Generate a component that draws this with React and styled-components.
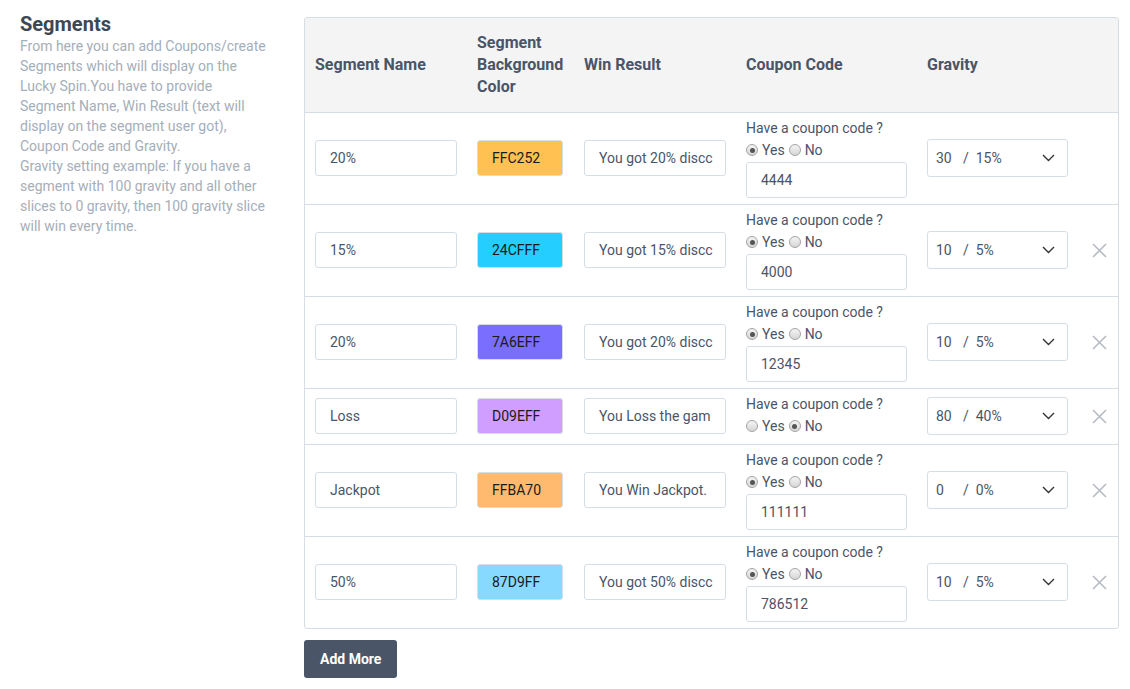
import React from "react";
import styled, { createGlobalStyle } from "styled-components";

const GlobalStyle = createGlobalStyle`
  body {
    margin: 0;
    background: #fff;
    font-family: Roboto, "Liberation Sans", Arial, sans-serif;
  }
`;

const Page = styled.div`
  display: flex;
  align-items: flex-start;
  padding: 12px 11px 0 20px;
`;

const Intro = styled.div`
  width: 248px;
  flex: none;
  margin-right: 36px;
`;

const Title = styled.h2`
  margin: 0;
  font-size: 20px;
  line-height: 24px;
  font-weight: 700;
  color: #3d4852;
`;

const Description = styled.p`
  margin: 0;
  font-size: 14px;
  line-height: 20px;
  color: #a5aeb9;
`;

const Main = styled.div`
  flex: 1;
  padding-top: 5px;
`;

const Card = styled.div`
  border: 1px solid #d7dde4;
  border-radius: 3px;
  overflow: hidden;
`;

const Table = styled.table`
  width: 100%;
  table-layout: fixed;
  border-collapse: separate;
  border-spacing: 0;
`;

const Th = styled.th`
  background: #f4f4f4;
  text-align: left;
  vertical-align: middle;
  padding: 14px 10px;
  font-size: 16px;
  line-height: 22px;
  font-weight: 700;
  color: #4a5568;
  border-bottom: 1px solid #d7dde4;
`;

const Td = styled.td`
  padding: 5px 10px 6px;
  vertical-align: middle;
  border-top: ${(p) => (p.$first ? "none" : "1px solid #d7dde4")};
`;

const TextInput = styled.div`
  box-sizing: border-box;
  width: ${(p) => p.$width || 142}px;
  height: 36px;
  border: 1px solid #d5dde5;
  border-radius: 3px;
  background: ${(p) => p.$bg || "#fff"};
  padding: 0 14px;
  display: flex;
  align-items: center;
  font-size: 14px;
  color: ${(p) => (p.$bg ? "#1a1a1a" : "#4a5568")};
  white-space: nowrap;
  overflow: hidden;
`;

const Question = styled.div`
  font-size: 14px;
  line-height: 20px;
  color: #4a5568;
`;

const RadioRow = styled.div`
  display: flex;
  align-items: center;
  height: 22px;
  margin-bottom: 2px;
  padding-top: 2px;
  box-sizing: border-box;
  font-size: 14px;
  color: #4a5568;
`;

const RadioDot = styled.span`
  box-sizing: border-box;
  width: 12px;
  height: 12px;
  border-radius: 50%;
  border: 1px solid #a3a3a3;
  background: linear-gradient(#f4f4f4, #d6d6d6);
  margin-right: 4px;
  display: inline-flex;
  align-items: center;
  justify-content: center;
  &::after {
    content: "";
    width: 5px;
    height: 5px;
    border-radius: 50%;
    background: ${(p) => (p.$checked ? "#555" : "transparent")};
  }
`;

const RadioLabel = styled.span`
  margin-right: 4px;
`;

const Select = styled.div`
  box-sizing: border-box;
  width: 141px;
  height: 38px;
  border: 1px solid #d5dde5;
  border-radius: 3px;
  padding: 0 12px 0 8px;
  display: flex;
  align-items: center;
  font-size: 14px;
  color: #4a5568;
`;

const GravityNum = styled.span`
  display: inline-block;
  width: 27px;
`;

const GravityPct = styled.span`
  flex: 1;
  white-space: pre;
`;

const Remove = styled.div`
  display: flex;
  justify-content: center;
  padding-left: 2px;
`;

const AddButton = styled.button`
  margin-top: 11px;
  height: 38px;
  padding: 0 16px;
  border: none;
  border-radius: 3px;
  background: #4a5568;
  color: #fff;
  font-family: inherit;
  font-size: 14px;
  font-weight: 700;
`;

const segments = [
  { name: "20%", color: "FFC252", result: "You got 20% discc", yes: true, code: "4444", gravity: "30", pct: "15%", removable: false },
  { name: "15%", color: "24CFFF", result: "You got 15% discc", yes: true, code: "4000", gravity: "10", pct: "5%", removable: true },
  { name: "20%", color: "7A6EFF", result: "You got 20% discc", yes: true, code: "12345", gravity: "10", pct: "5%", removable: true },
  { name: "Loss", color: "D09EFF", result: "You Loss the gam", yes: false, code: "", gravity: "80", pct: "40%", removable: true },
  { name: "Jackpot", color: "FFBA70", result: "You Win Jackpot.", yes: true, code: "111111", gravity: "0", pct: "0%", removable: true },
  { name: "50%", color: "87D9FF", result: "You got 50% discc", yes: true, code: "786512", gravity: "10", pct: "5%", removable: true },
];

const Chevron = () => (
  <svg width="13" height="8" viewBox="0 0 13 8" fill="none">
    <path d="M1 1l5.5 5.5L12 1" stroke="#333" strokeWidth="1.4" />
  </svg>
);

const Close = () => (
  <svg width="15" height="15" viewBox="0 0 15 15" fill="none">
    <path d="M1 1l13 13M14 1L1 14" stroke="#b5bcc4" strokeWidth="1.6" />
  </svg>
);

export default function App() {
  return (
    <>
      <GlobalStyle />
      <Page>
        <Intro>
          <Title>Segments</Title>
          <Description>
            From here you can add Coupons/create Segments which will display on the Lucky Spin.You have to provide
            Segment Name, Win Result (text will display on the segment user got), Coupon Code and Gravity.
            <br />
            Gravity setting example: If you have a segment with 100 gravity and all other slices to 0 gravity, then
            100 gravity slice will win every time.
          </Description>
        </Intro>
        <Main>
          <Card>
            <Table>
              <colgroup>
                <col style={{ width: 162 }} />
                <col style={{ width: 107 }} />
                <col style={{ width: 162 }} />
                <col style={{ width: 181 }} />
                <col style={{ width: 161 }} />
                <col />
              </colgroup>
              <thead>
                <tr>
                  <Th>Segment Name</Th>
                  <Th>Segment Background Color</Th>
                  <Th>Win Result</Th>
                  <Th>Coupon Code</Th>
                  <Th>Gravity</Th>
                  <Th />
                </tr>
              </thead>
              <tbody>
                {segments.map((s, i) => (
                  <tr key={i}>
                    <Td $first={i === 0}>
                      <TextInput>{s.name}</TextInput>
                    </Td>
                    <Td $first={i === 0}>
                      <TextInput $width={86} $bg={"#" + s.color}>
                        {s.color}
                      </TextInput>
                    </Td>
                    <Td $first={i === 0}>
                      <TextInput>{s.result}</TextInput>
                    </Td>
                    <Td $first={i === 0}>
                      <Question>Have a coupon code ?</Question>
                      <RadioRow>
                        <RadioDot $checked={s.yes} />
                        <RadioLabel>Yes</RadioLabel>
                        <RadioDot $checked={!s.yes} />
                        <RadioLabel>No</RadioLabel>
                      </RadioRow>
                      {s.yes && <TextInput $width={161}>{s.code}</TextInput>}
                    </Td>
                    <Td $first={i === 0}>
                      <Select>
                        <GravityNum>{s.gravity}</GravityNum>
                        <GravityPct>{"/  " + s.pct}</GravityPct>
                        <Chevron />
                      </Select>
                    </Td>
                    <Td $first={i === 0}>
                      {s.removable && (
                        <Remove>
                          <Close />
                        </Remove>
                      )}
                    </Td>
                  </tr>
                ))}
              </tbody>
            </Table>
          </Card>
          <AddButton>Add More</AddButton>
        </Main>
      </Page>
    </>
  );
}
